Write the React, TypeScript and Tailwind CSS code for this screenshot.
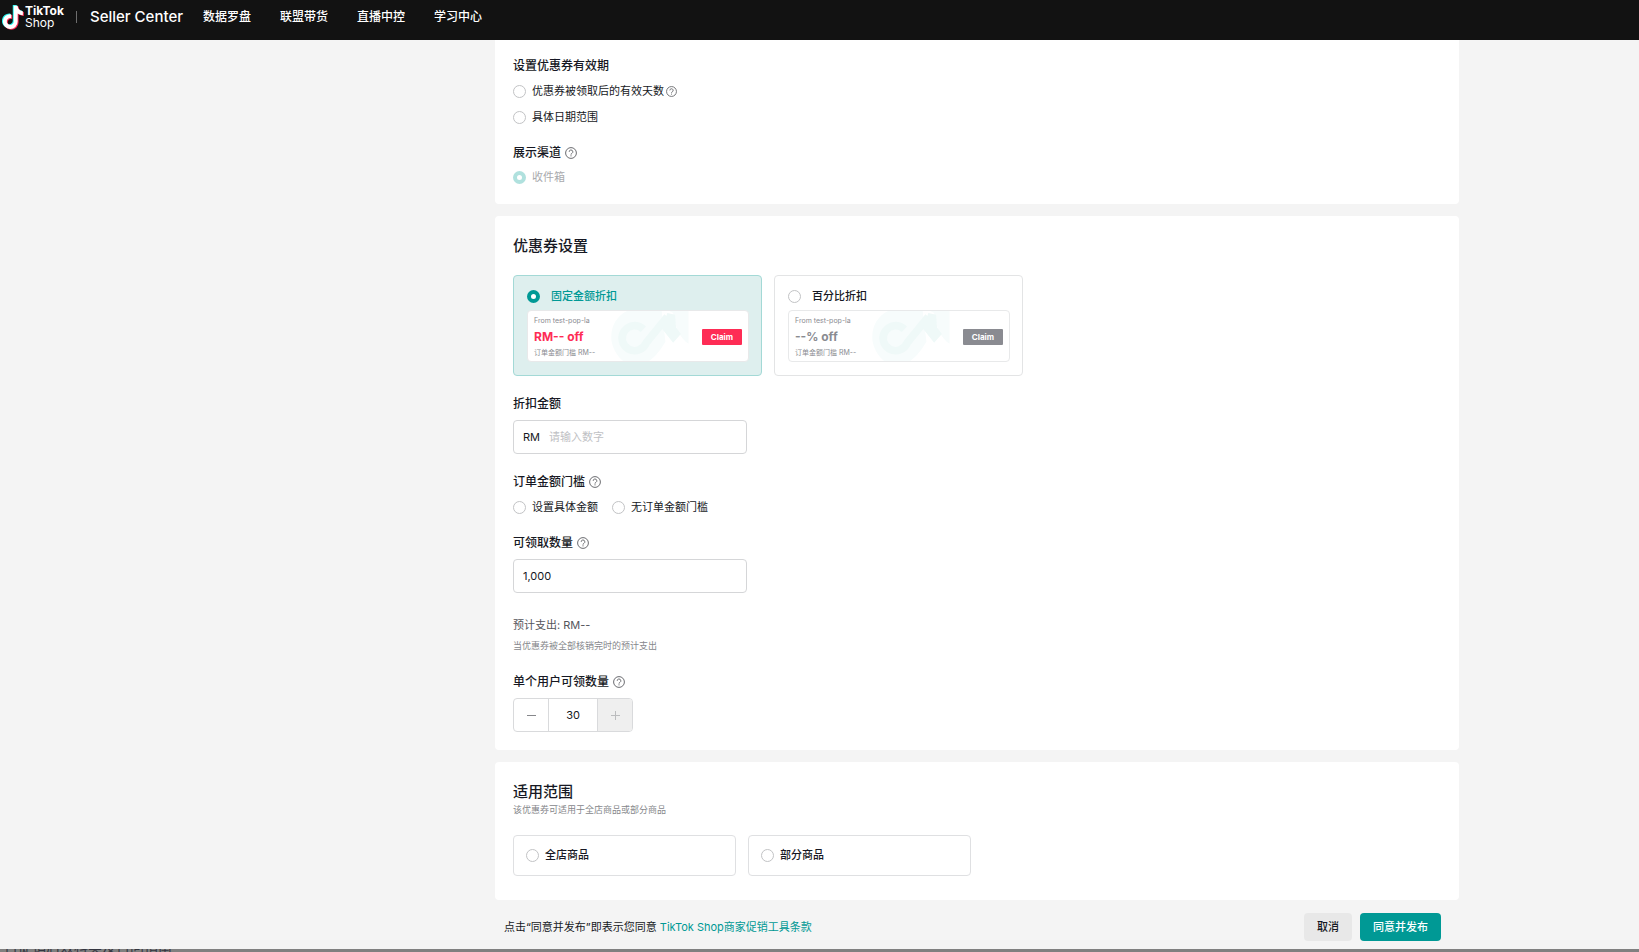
import { useState, type ReactNode } from "react";
import { clsx } from "clsx";

const NAV_ITEMS = ["数据罗盘", "联盟带货", "直播中控", "学习中心"];

function TikTokLogo() {
  const note =
    "M16.6 0h-4.1v16.3a3.6 3.6 0 1 1-2.6-3.4V8.8a7.7 7.7 0 1 0 6.7 7.6V8.1a9.6 9.6 0 0 0 5.4 1.7V5.7A5.5 5.5 0 0 1 16.6 0Z";

  return (
    <svg viewBox="1.5 0 22.5 26" className="h-[25px] w-[22px] flex-shrink-0" aria-hidden="true">
      <path d={note} fill="#25f4ee" />
      <path d={note} fill="#fe2c55" transform="translate(2 1.6)" />
      <path d={note} fill="#fff" transform="translate(1 .8)" />
    </svg>
  );
}

function HelpIcon({ small }: { small?: boolean }) {
  return (
    <svg
      viewBox="0 0 24 24"
      className={clsx("flex-shrink-0 text-[#6b6c70]", small ? "h-[11px] w-[11px]" : "h-3 w-3")}
      fill="none"
      stroke="currentColor"
      strokeWidth="2"
      aria-hidden="true"
    >
      <circle cx="12" cy="12" r="10.8" />
      <path d="M8.4 9.6a3.6 3.6 0 1 1 5.4 3.1c-1.2.7-1.8 1.2-1.8 2.5" />
      <path d="M12 16.6v2.2" />
    </svg>
  );
}

function Watermark() {
  return (
    <svg viewBox="0 0 84 52" className="absolute left-[82px] top-0 h-full w-[84px]" aria-hidden="true">
      <path d="M16 0C4 6-2 18 0 32c2 9 6 15 12 20h27c8-6 12-12 17-20L52 0Z" fill="#f7fcfc" />
      <path d="M60 0h20v34C71 28 66 17 64 2Z" fill="#f7fcfc" />
      <path d="M33 19a13 13 0 1 0 3 14L58 6" fill="none" stroke="#eff9f8" strokeWidth="8" />
      <path d="m58 2 8 2 1 13 5 7-8 9-12-15Z" fill="#eff9f8" />
    </svg>
  );
}

interface RadioProps {
  name: string;
  checked: boolean;
  disabled?: boolean;
  onChange?: () => void;
}

function Radio({ name, checked, disabled, onChange }: RadioProps) {
  return (
    <input
      type="radio"
      name={name}
      checked={checked}
      disabled={disabled}
      onChange={onChange}
      className="h-[13px] w-[13px] flex-shrink-0 appearance-none rounded-full border border-[#c2c3c5] bg-white checked:border-4 checked:border-[#009995] disabled:checked:border-[#b0e1de]"
    />
  );
}

function RadioOption({ children, ...radio }: RadioProps & { children: ReactNode }) {
  return (
    <label className={clsx("flex items-center gap-1.5 text-[11px] leading-4", radio.disabled && "text-[#a9aaad]")}>
      <Radio {...radio} />
      {children}
    </label>
  );
}

function FieldTitle({ children, help }: { children: ReactNode; help?: boolean }) {
  return (
    <h3 className="flex items-center gap-1 text-xs font-medium leading-4">
      {children}
      {help && <HelpIcon />}
    </h3>
  );
}

interface DiscountCardProps {
  title: string;
  offer: string;
  active: boolean;
  onSelect: () => void;
}

function DiscountCard({ title, offer, active, onSelect }: DiscountCardProps) {
  return (
    <div
      className={clsx(
        "w-[249px] rounded-sm border pb-[13px] pl-[13px] pr-3 pt-3",
        active ? "border-[#a3d9d6] bg-[#deefee]" : "border-[#e3e4e5] bg-white",
      )}
    >
      <label className={clsx("flex items-center gap-[11px] text-[11px] font-medium leading-4", active && "text-[#009995]")}>
        <Radio name="discount" checked={active} onChange={onSelect} />
        {title}
      </label>
      <div className="relative mt-1.5 flex items-center justify-between overflow-hidden rounded-sm border border-[#e8e9ea] bg-white px-1.5 pb-0.5 pt-1">
        <Watermark />
        <div className="relative text-[#8a8b91]">
          <p className="text-[7px] leading-3">From test-pop-la</p>
          <p className={clsx("text-xs font-bold leading-5", active && "text-[#fe2c55]")}>{offer}</p>
          <p className="text-[7px] leading-3">订单金额门槛 RM--</p>
        </div>
        <button
          type="button"
          className={clsx(
            "relative rounded-[1px] px-[9px] text-[8px] font-bold leading-4 text-white",
            active ? "bg-[#fe2c55]" : "bg-[#8a8b91]",
          )}
        >
          Claim
        </button>
      </div>
    </div>
  );
}

export default function App() {
  const [validity, setValidity] = useState("");
  const [discount, setDiscount] = useState("fixed");
  const [threshold, setThreshold] = useState("");
  const [scope, setScope] = useState("");
  const [amount, setAmount] = useState("");
  const [quantity, setQuantity] = useState("1,000");
  const [perUser, setPerUser] = useState(30);

  return (
    <div className="flex min-h-screen flex-col bg-[#f4f4f4] font-[Inter,'Noto_Sans_CJK_SC',sans-serif] text-[#161823]">
      <header className="flex h-10 items-center bg-[#121212] pb-1.5 pl-0.5 text-white">
        <TikTokLogo />
        <div className="ml-px text-xs leading-3">
          <p className="font-bold">TikTok</p>
          <p>Shop</p>
        </div>
        <span className="ml-3 h-3 w-px bg-[#6d6d6d]" />
        <span className="ml-[13px] text-[15px] font-medium leading-5">Seller Center</span>
        <nav className="ml-5 flex gap-[29px] text-xs font-medium leading-4">
          {NAV_ITEMS.map((item) => (
            <a key={item} href="#">
              {item}
            </a>
          ))}
        </nav>
      </header>

      <main className="flex-1 pl-[315px]">
        <form className="mx-auto max-w-[964px]" onSubmit={(e) => e.preventDefault()}>
          <section className="rounded-b-sm bg-white px-[18px] pb-[19px] pt-[18px]">
            <FieldTitle>设置优惠券有效期</FieldTitle>
            <div className="mt-[9px] flex flex-col items-start gap-[10px]">
              <RadioOption name="validity" checked={validity === "days"} onChange={() => setValidity("days")}>
                <span className="flex items-center gap-0.5">
                  优惠券被领取后的有效天数
                  <HelpIcon small />
                </span>
              </RadioOption>
              <RadioOption name="validity" checked={validity === "range"} onChange={() => setValidity("range")}>
                具体日期范围
              </RadioOption>
            </div>
            <div className="mt-5 flex flex-col items-start gap-2">
              <FieldTitle help>展示渠道</FieldTitle>
              <RadioOption name="channel" checked disabled>
                收件箱
              </RadioOption>
            </div>
          </section>

          <section className="mt-3 rounded-sm bg-white px-[18px] py-[18px]">
            <h2 className="text-[15px] font-medium leading-6">优惠券设置</h2>
            <div className="mt-[17px] flex gap-3">
              <DiscountCard
                title="固定金额折扣"
                offer="RM-- off"
                active={discount === "fixed"}
                onSelect={() => setDiscount("fixed")}
              />
              <DiscountCard
                title="百分比折扣"
                offer="--% off"
                active={discount === "percent"}
                onSelect={() => setDiscount("percent")}
              />
            </div>

            <div className="mt-5">
              <FieldTitle>折扣金额</FieldTitle>
              <label className="mt-2 flex h-[34px] w-[234px] items-center gap-[9px] rounded-sm border border-[#d5d6d8] px-[9px] text-[11px]">
                RM
                <input
                  type="text"
                  value={amount}
                  onChange={(e) => setAmount(e.target.value)}
                  placeholder="请输入数字"
                  className="min-w-0 flex-1 outline-none placeholder:text-[#c0c1c4]"
                />
              </label>
            </div>

            <div className="mt-5">
              <FieldTitle help>订单金额门槛</FieldTitle>
              <div className="mt-[9px] flex gap-[14px]">
                <RadioOption name="threshold" checked={threshold === "set"} onChange={() => setThreshold("set")}>
                  设置具体金额
                </RadioOption>
                <RadioOption name="threshold" checked={threshold === "none"} onChange={() => setThreshold("none")}>
                  无订单金额门槛
                </RadioOption>
              </div>
            </div>

            <div className="mt-5">
              <FieldTitle help>可领取数量</FieldTitle>
              <input
                type="text"
                aria-label="可领取数量"
                value={quantity}
                onChange={(e) => setQuantity(e.target.value)}
                className="mt-2 block h-[34px] w-[234px] rounded-sm border border-[#d5d6d8] px-[9px] text-[11px] outline-none"
              />
            </div>

            <p className="mt-6 text-[11px] leading-4 text-[#55565c]">预计支出: RM--</p>
            <p className="mt-[5px] text-[9px] leading-4 text-[#86878b]">当优惠券被全部核销完时的预计支出</p>

            <div className="mt-5">
              <FieldTitle help>单个用户可领数量</FieldTitle>
              <div className="mt-2 inline-flex h-[34px] overflow-hidden rounded-sm border border-[#d9dadc] align-top">
                <button
                  type="button"
                  aria-label="减少"
                  onClick={() => setPerUser(Math.max(1, perUser - 1))}
                  className="flex w-[34px] items-center justify-center"
                >
                  <span className="h-px w-[9px] bg-[#86878b]" />
                </button>
                <input
                  type="text"
                  aria-label="单个用户可领数量"
                  value={perUser}
                  onChange={(e) => setPerUser(Number(e.target.value) || 1)}
                  className="w-[50px] border-x border-[#d9dadc] text-center text-[11px] outline-none"
                />
                <button
                  type="button"
                  aria-label="增加"
                  disabled={perUser >= 30}
                  onClick={() => setPerUser(perUser + 1)}
                  className="flex w-[34px] items-center justify-center bg-[#efefef] text-[#bbbcbe]"
                >
                  <svg viewBox="0 0 9 9" className="h-[9px] w-[9px]" stroke="currentColor" aria-hidden="true">
                    <path d="M0 4.5h9M4.5 0v9" />
                  </svg>
                </button>
              </div>
            </div>
          </section>

          <section className="mt-3 rounded-sm bg-white px-[18px] pb-6 pt-[18px]">
            <h2 className="text-[15px] font-medium leading-6">适用范围</h2>
            <p className="text-[9px] leading-3 text-[#86878b]">该优惠券可适用于全店商品或部分商品</p>
            <div className="mt-[19px] flex gap-3">
              {["全店商品", "部分商品"].map((item) => (
                <label
                  key={item}
                  className="flex h-[41px] w-[223px] items-center gap-1.5 rounded-sm border border-[#dfe0e2] px-3 text-[11px] font-medium"
                >
                  <Radio name="scope" checked={scope === item} onChange={() => setScope(item)} />
                  {item}
                </label>
              ))}
            </div>
          </section>

          <footer className="flex items-center justify-between pb-2 pl-[9px] pr-[18px] pt-[13px] text-[11px]">
            <p>
              点击“同意并发布”即表示您同意{" "}
              <a href="#" className="text-[#009995]">
                TikTok Shop商家促销工具条款
              </a>
            </p>
            <div className="flex gap-2 font-medium">
              <button type="button" className="h-7 rounded-sm bg-[#e8e8e8] px-[13px]">
                取消
              </button>
              <button type="submit" className="h-7 rounded-sm bg-[#009995] px-[13px] text-white">
                同意并发布
              </button>
            </div>
          </footer>
        </form>
      </main>

      {/* sliver of the page underneath, only the feet of its heading show */}
      <div className="flex h-1 flex-shrink-0 items-end overflow-hidden bg-[#808080] pl-1 text-sm leading-3 text-[#34353f]">
        日促销后效科类及百问指南
      </div>
    </div>
  );
}
